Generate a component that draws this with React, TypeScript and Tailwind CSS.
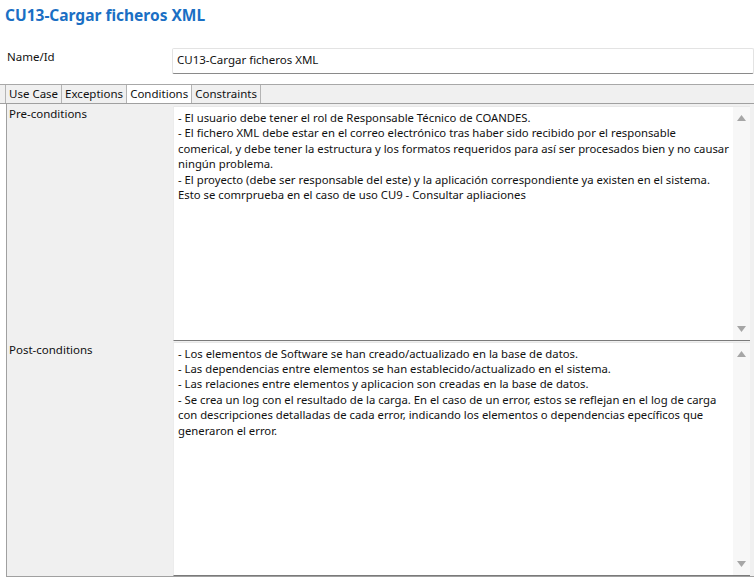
import React from "react";

const pre = `- El usuario debe tener el rol de Responsable Técnico de COANDES.
- El fichero XML debe estar en el correo electrónico tras haber sido recibido por el responsable
comerical, y debe tener la estructura y los formatos requeridos para así ser procesados bien y no causar
ningún problema.
- El proyecto (debe ser responsable del este) y la aplicación correspondiente ya existen en el sistema.
Esto se comrprueba en el caso de uso CU9 - Consultar apliaciones`;

const post = `- Los elementos de Software se han creado/actualizado en la base de datos.
- Las dependencias entre elementos se han establecido/actualizado en el sistema.
- Las relaciones entre elementos y aplicacion son creadas en la base de datos.
- Se crea un log con el resultado de la carga. En el caso de un error, estos se reflejan en el log de carga
con descripciones detalladas de cada error, indicando los elementos o dependencias epecíficos que
generaron el error.`;

function Area({ text }: { text: string }) {
  return (
    <div className="flex-1 flex bg-white border-t border-t-[#e8e8e8] border-l border-l-[#ececec] border-b border-b-[#7a7a7a]">
      <div className="flex-1 pl-[4px] pr-[2px] pt-[3px] whitespace-pre leading-[15.4px] text-[11.3px] text-[#111] overflow-hidden">
        {text}
      </div>
      <div className="w-[17px] bg-[#f7f7f7] flex flex-col justify-between items-center py-[8px]">
        <svg width="9" height="6" viewBox="0 0 9 6">
          <polygon points="4.5,0 9,6 0,6" fill="#a6a6a6" />
        </svg>
        <svg width="9" height="6" viewBox="0 0 9 6">
          <polygon points="0,0 9,0 4.5,6" fill="#a6a6a6" />
        </svg>
      </div>
    </div>
  );
}

export default function App() {
  return (
    <div
      className="w-[754px] h-[579px] bg-white overflow-hidden flex flex-col text-[#111]"
      style={{ fontFamily: '"Noto Sans", "Open Sans", sans-serif' }}
    >
      <div className="h-[34px] pl-[5px] pt-[4px] text-[15.5px] font-bold text-[#1a6fc4] leading-[22px]">
        CU13-Cargar ficheros XML
      </div>
      <div className="flex h-[26px] mt-[14px]">
        <div className="w-[172px] pl-[7px] pt-[1px] text-[11.5px] leading-[16px]">Name/Id</div>
        <div className="flex-1 border border-[#e3e3e3] border-b-[#8a8a8a] rounded-[2px] pl-[4px] text-[11.5px] leading-[22px]">
          CU13-Cargar ficheros XML
        </div>
      </div>
      <div className="mt-[10px] flex h-[20px] bg-[#f0f0f0] border-t border-t-[#a8a8a8] border-b border-b-[#a0a0a0] pl-[6px]">
        {["Use Case", "Exceptions", "Conditions", "Constraints"].map((t) => (
          <div
            key={t}
            className={
              "px-[3px] text-[11.5px] leading-[17px] border-l border-r border-[#b4b4b4] -ml-px " +
              (t === "Conditions" ? "bg-white" : "bg-[#f0f0f0]")
            }
          >
            {t}
          </div>
        ))}
      </div>
      <div className="flex-1 ml-[6px] mb-[2px] border-l border-b border-[#a0a0a0] bg-[#f0f0f0] flex flex-col pt-[2px] pr-[4px] gap-[1px]">
        <div className="flex flex-1">
          <div className="w-[166px] pl-[2px] text-[11.5px] leading-[16px]">Pre-conditions</div>
          <Area text={pre} />
        </div>
        <div className="flex flex-1">
          <div className="w-[166px] pl-[2px] text-[11.5px] leading-[16px]">Post-conditions</div>
          <Area text={post} />
        </div>
      </div>
    </div>
  );
}
